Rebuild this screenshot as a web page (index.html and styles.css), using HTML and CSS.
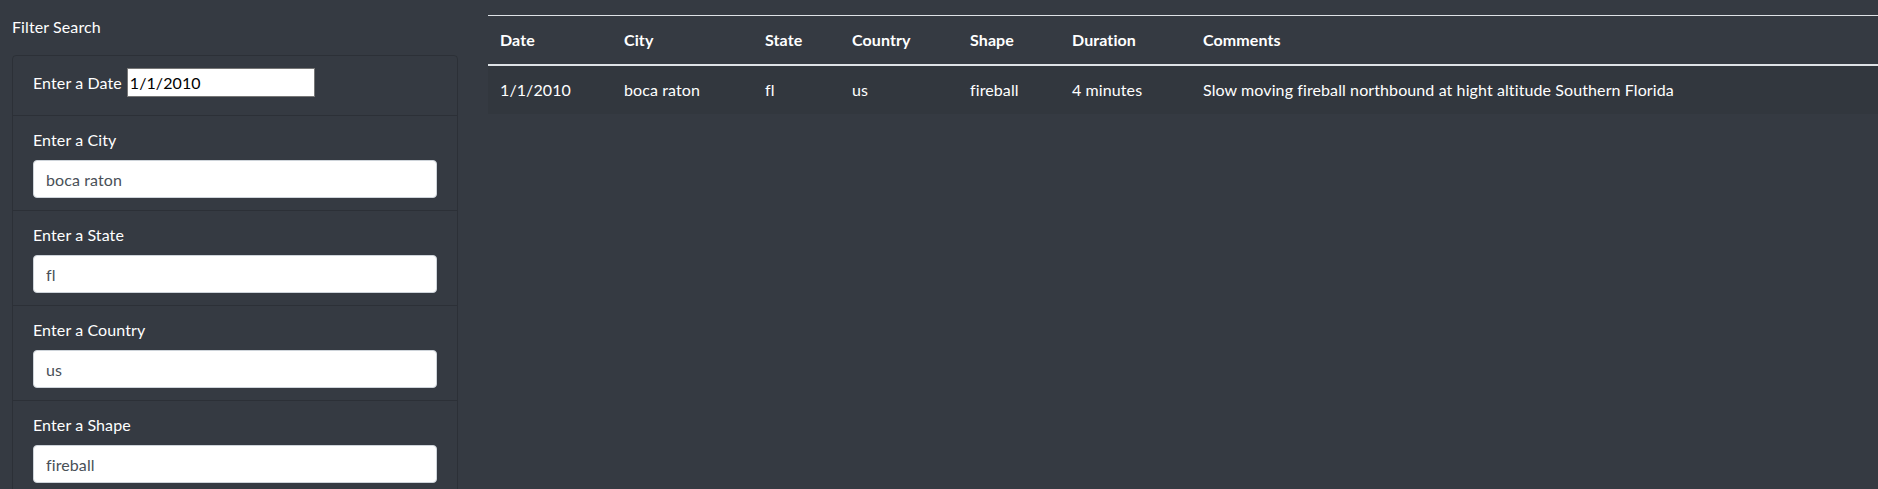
FILE: index.html
```html
<!DOCTYPE html>
<html lang="en">
<head>
<meta charset="utf-8">
<title>UFO Sightings</title>
<link rel="stylesheet" href="styles.css">
</head>
<body>
<div class="page">
  <aside class="sidebar">
    <div class="sidebar-title">Filter Search</div>
    <div class="card">
      <ul class="filters">
        <li class="filter filter-inline">
          <label class="filter-label" for="datetime">Enter a Date</label>
          <input class="date-input" id="datetime" type="text" value="1/1/2010">
        </li>
        <li class="filter">
          <label class="filter-label" for="city">Enter a City</label>
          <input class="form-control" id="city" type="text" value="boca raton">
        </li>
        <li class="filter">
          <label class="filter-label" for="state">Enter a State</label>
          <input class="form-control" id="state" type="text" value="fl">
        </li>
        <li class="filter">
          <label class="filter-label" for="country">Enter a Country</label>
          <input class="form-control" id="country" type="text" value="us">
        </li>
        <li class="filter">
          <label class="filter-label" for="shape">Enter a Shape</label>
          <input class="form-control" id="shape" type="text" value="fireball">
        </li>
      </ul>
    </div>
  </aside>
  <main class="results">
    <table class="table">
      <colgroup>
        <col class="col-date">
        <col class="col-city">
        <col class="col-state">
        <col class="col-country">
        <col class="col-shape">
        <col class="col-duration">
        <col class="col-comments">
      </colgroup>
      <thead>
        <tr>
          <th>Date</th>
          <th>City</th>
          <th>State</th>
          <th>Country</th>
          <th>Shape</th>
          <th>Duration</th>
          <th>Comments</th>
        </tr>
      </thead>
      <tbody>
        <tr class="row-odd">
          <td>1/1/2010</td>
          <td>boca raton</td>
          <td>fl</td>
          <td>us</td>
          <td>fireball</td>
          <td>4 minutes</td>
          <td>Slow moving fireball northbound at hight altitude Southern Florida</td>
        </tr>
      </tbody>
    </table>
  </main>
</div>
</body>
</html>
```

FILE: styles.css
```css
* {
  box-sizing: border-box;
}

html, body {
  margin: 0;
  height: 100%;
  overflow: hidden;
}

body {
  background: #353a42;
  color: #ffffff;
  font-family: Lato, "Open Sans", sans-serif;
  font-size: 16px;
  line-height: 24px;
  letter-spacing: 0.1px;
  font-variant-ligatures: none;
}

.page {
  display: flex;
  align-items: flex-start;
}

.sidebar {
  flex: 0 0 auto;
  width: 458px;
  padding-left: 12px;
  padding-top: 15px;
}

.sidebar-title {
  height: 24px;
  margin-bottom: 16px;
}

.card {
  width: 446px;
  border: 1px solid rgba(0, 0, 0, 0.16);
  border-radius: 4px;
}

.filters {
  list-style: none;
  margin: 0;
  padding: 0;
}

.filter {
  height: 95px;
  padding: 12px 20px;
  border-bottom: 1px solid rgba(0, 0, 0, 0.16);
}

.filter-inline {
  height: 60px;
  display: flex;
  align-items: baseline;
  gap: 5px;
}

.filter-label {
  display: block;
  height: 24px;
  margin-bottom: 8px;
}

.date-input {
  width: 188px;
  height: 29px;
  padding: 1px 2px;
  border: 1px solid #767676;
  border-radius: 0;
  background: #ffffff;
  color: #000000;
  font: inherit;
  letter-spacing: inherit;
  font-variant-ligatures: none;
  line-height: 24px;
}

.form-control {
  display: block;
  width: 100%;
  height: 38px;
  padding: 6px 12px;
  border: 1px solid #ced4da;
  border-radius: 4px;
  background: #ffffff;
  color: #495057;
  font: inherit;
  letter-spacing: inherit;
  font-variant-ligatures: none;
  line-height: 24px;
}

.results {
  flex: 1 1 auto;
  margin-left: 30px;
  padding-top: 15px;
}

.table {
  width: 100%;
  table-layout: fixed;
  border-collapse: collapse;
}

.col-date { width: 124px; }
.col-city { width: 141px; }
.col-state { width: 87px; }
.col-country { width: 118px; }
.col-shape { width: 102px; }
.col-duration { width: 131px; }

.table th,
.table td {
  padding: 12px;
  text-align: left;
  vertical-align: top;
  white-space: nowrap;
}

.table th {
  font-weight: 700;
  border-top: 1px solid #dee2e6;
  border-bottom: 2px solid #dee2e6;
}

.row-odd {
  background: rgba(0, 0, 0, 0.05);
}
```
